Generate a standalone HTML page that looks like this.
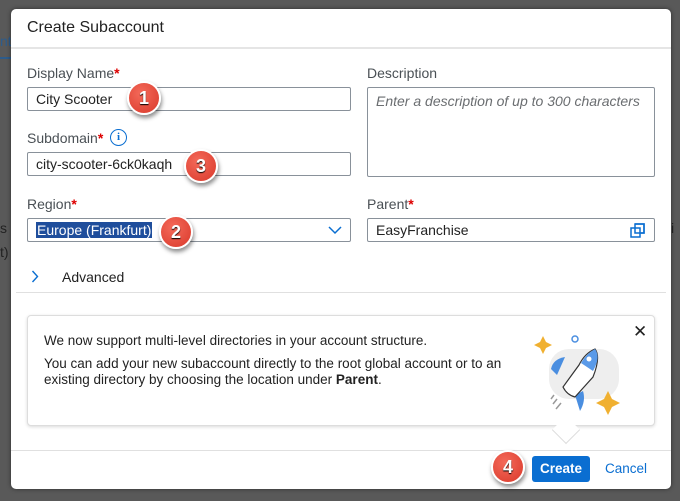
<!DOCTYPE html>
<html><head><style>
*{box-sizing:border-box;margin:0;padding:0}
body{width:680px;height:501px;background:#595959;font-family:"Liberation Sans",Arial,sans-serif;position:relative;overflow:hidden;color:#32363a}
.bgt{position:absolute;color:#222;font-size:14px}
.dlg{position:absolute;left:11px;top:9px;width:660px;height:480px;background:#fff;border-radius:5px;box-shadow:0 0 4px rgba(0,0,0,.5)}
.a{position:absolute}
.lbl{font-size:14px;color:#4a5055}
.lbl b{color:#d00;font-weight:bold}
.inp{position:absolute;border:1px solid #89919a;border-radius:2px;background:#fff;font-size:14px;padding:0 8px;display:flex;align-items:center;color:#222}
.badge{position:absolute;width:34px;height:34px;border-radius:50%;background:radial-gradient(circle at 40% 35%,#f46a5a,#d9382a);border:2px solid #fff;box-shadow:1px 3px 4px rgba(0,0,0,.45);color:#fff;font-weight:bold;font-size:18px;display:flex;align-items:center;justify-content:center;text-shadow:0 1px 1px #000}
</style></head><body>
<div class="bgt" style="left:0;top:33px;color:#2d5c8c">nt</div>
<div class="a" style="left:0;top:57px;width:11px;height:2px;background:#2d5c8c"></div>
<div class="bgt" style="left:0;top:220px">s (</div>
<div class="bgt" style="left:0;top:244px">t)</div>
<div class="bgt" style="left:671px;top:220px">i</div>
<div class="dlg">
 <div class="a" style="left:16px;top:10px;font-size:16px;color:#222">Create Subaccount</div>
 <div class="a" style="left:0;top:38px;width:660px;height:2px;background:#e5e5e5"></div>

 <div class="a lbl" style="left:16px;top:56px">Display Name<b>*</b></div>
 <div class="inp" style="left:16px;top:78px;width:324px;height:24px">City Scooter</div>
 <div class="a lbl" style="left:16px;top:121px">Subdomain<b>*</b></div>
 <div class="a" style="left:99px;top:120px;width:17px;height:17px;border:1.5px solid #0a6ed1;border-radius:50%;color:#0a6ed1;font-size:11px;font-weight:bold;text-align:center;line-height:14px;font-family:'Liberation Serif',serif">i</div>
 <div class="inp" style="left:16px;top:143px;width:324px;height:24px">city-scooter-6ck0kaqh</div>
 <div class="a lbl" style="left:16px;top:187px">Region<b>*</b></div>
 <div class="inp" style="left:16px;top:209px;width:324px;height:24px"><span style="background:#1f4e9c;color:#fff;padding:0 1px">Europe (Frankfurt)</span>
  <svg class="a" style="right:8px;top:7px" width="14" height="9" viewBox="0 0 14 9"><path d="M1 1l6 6 6-6" fill="none" stroke="#0a6ed1" stroke-width="1.5"/></svg></div>

 <div class="a lbl" style="left:356px;top:56px">Description</div>
 <div class="inp" style="left:356px;top:78px;width:288px;height:90px;align-items:flex-start;padding-top:5px;color:#6a6d70;font-style:italic">Enter a description of up to 300 characters</div>
 <div class="a lbl" style="left:356px;top:187px">Parent<b>*</b></div>
 <div class="inp" style="left:356px;top:209px;width:288px;height:24px">EasyFranchise
  <svg class="a" style="right:9px;top:4px" width="15" height="15" viewBox="0 0 15 15"><path d="M5 1h9v9h-3M1 5h9v9H1z" fill="none" stroke="#0a6ed1" stroke-width="1.5"/><rect x="5" y="1" width="9" height="9" fill="none" stroke="#0a6ed1" stroke-width="1.5"/></svg></div>

 <svg class="a" style="left:20px;top:261px" width="8" height="13" viewBox="0 0 8 13"><path d="M1.5 1l5 5.5-5 5.5" fill="none" stroke="#0a6ed1" stroke-width="1.4"/></svg>
 <div class="a" style="left:51px;top:260px;font-size:14px;color:#222">Advanced</div>
 <div class="a" style="left:5px;top:283px;width:650px;height:1px;background:#e0e0e0"></div>

 <div class="a" style="left:16px;top:306px;width:628px;height:111px;border:1px solid #ddd;border-radius:4px;box-shadow:0 1px 3px rgba(0,0,0,.15);background:#fff"></div>
 <div class="a" style="left:545px;top:411px;width:20px;height:20px;background:#fff;transform:rotate(45deg);border-right:1px solid #ddd;border-bottom:1px solid #ddd"></div>
 <div class="a" style="left:33px;top:324px;font-size:13.5px;color:#222;line-height:16px">We now support multi-level directories in your account structure.</div>
 <div class="a" style="left:33px;top:347px;font-size:13.5px;color:#222;line-height:16px;width:470px">You can add your new subaccount directly to the root global account or to an existing directory by choosing the location under <b>Parent</b>.</div>
 <div class="a" style="left:622px;top:313px;font-size:17px;color:#222">✕</div>
 <svg class="a" style="left:520px;top:320px" width="100" height="100" viewBox="0 0 100 100">
  <rect x="18" y="20" width="70" height="50" rx="20" fill="#eee"/>
  <path d="M12 7l3 6 6 3-6 3-3 6-3-6-6-3 6-3z" fill="#f0b030"/>
  <path d="M77 62l4 8 8 4-8 4-4 8-4-8-8-4 8-4z" fill="#f0b030"/>
  <circle cx="44" cy="10" r="3" fill="none" stroke="#4a8ee0" stroke-width="1.5"/>
  <path d="M20 40 Q22 30 34 28 L26 46z" fill="#4a8ee0"/>
  <path d="M52 62 Q55 72 49 82 L44 66z" fill="#4a8ee0"/>
  <path d="M64 20 Q70 28 62 48 L44 68 Q36 66 32 58 L48 36 Q54 24 64 20z" fill="#fff" stroke="#333" stroke-width="1.2"/>
  <path d="M64 20 Q70 28 62 42 L50 34 Q56 24 64 20z" fill="#5a9ae8"/>
  <circle cx="58" cy="30" r="2.5" fill="#fff"/>
  <path d="M26 70l-4 5M30 74l-5 6M23 66l-3 4" stroke="#999" stroke-width="1.5"/>
 </svg>

 <div class="a" style="left:0;top:441px;width:660px;height:1px;background:#e0e0e0"></div>
 <div class="a" style="left:521px;top:447px;width:58px;height:26px;background:#0a6ed1;border-radius:3px;color:#fff;font-size:13.5px;font-weight:bold;text-align:center;line-height:26px">Create</div>
 <div class="a" style="left:594px;top:452px;color:#0a6ed1;font-size:13.5px">Cancel</div>
</div>
<div class="badge" style="left:127px;top:81px">1</div>
<div class="badge" style="left:184px;top:149px">3</div>
<div class="badge" style="left:159px;top:215px">2</div>
<div class="badge" style="left:491px;top:450px">4</div>
</body></html>
